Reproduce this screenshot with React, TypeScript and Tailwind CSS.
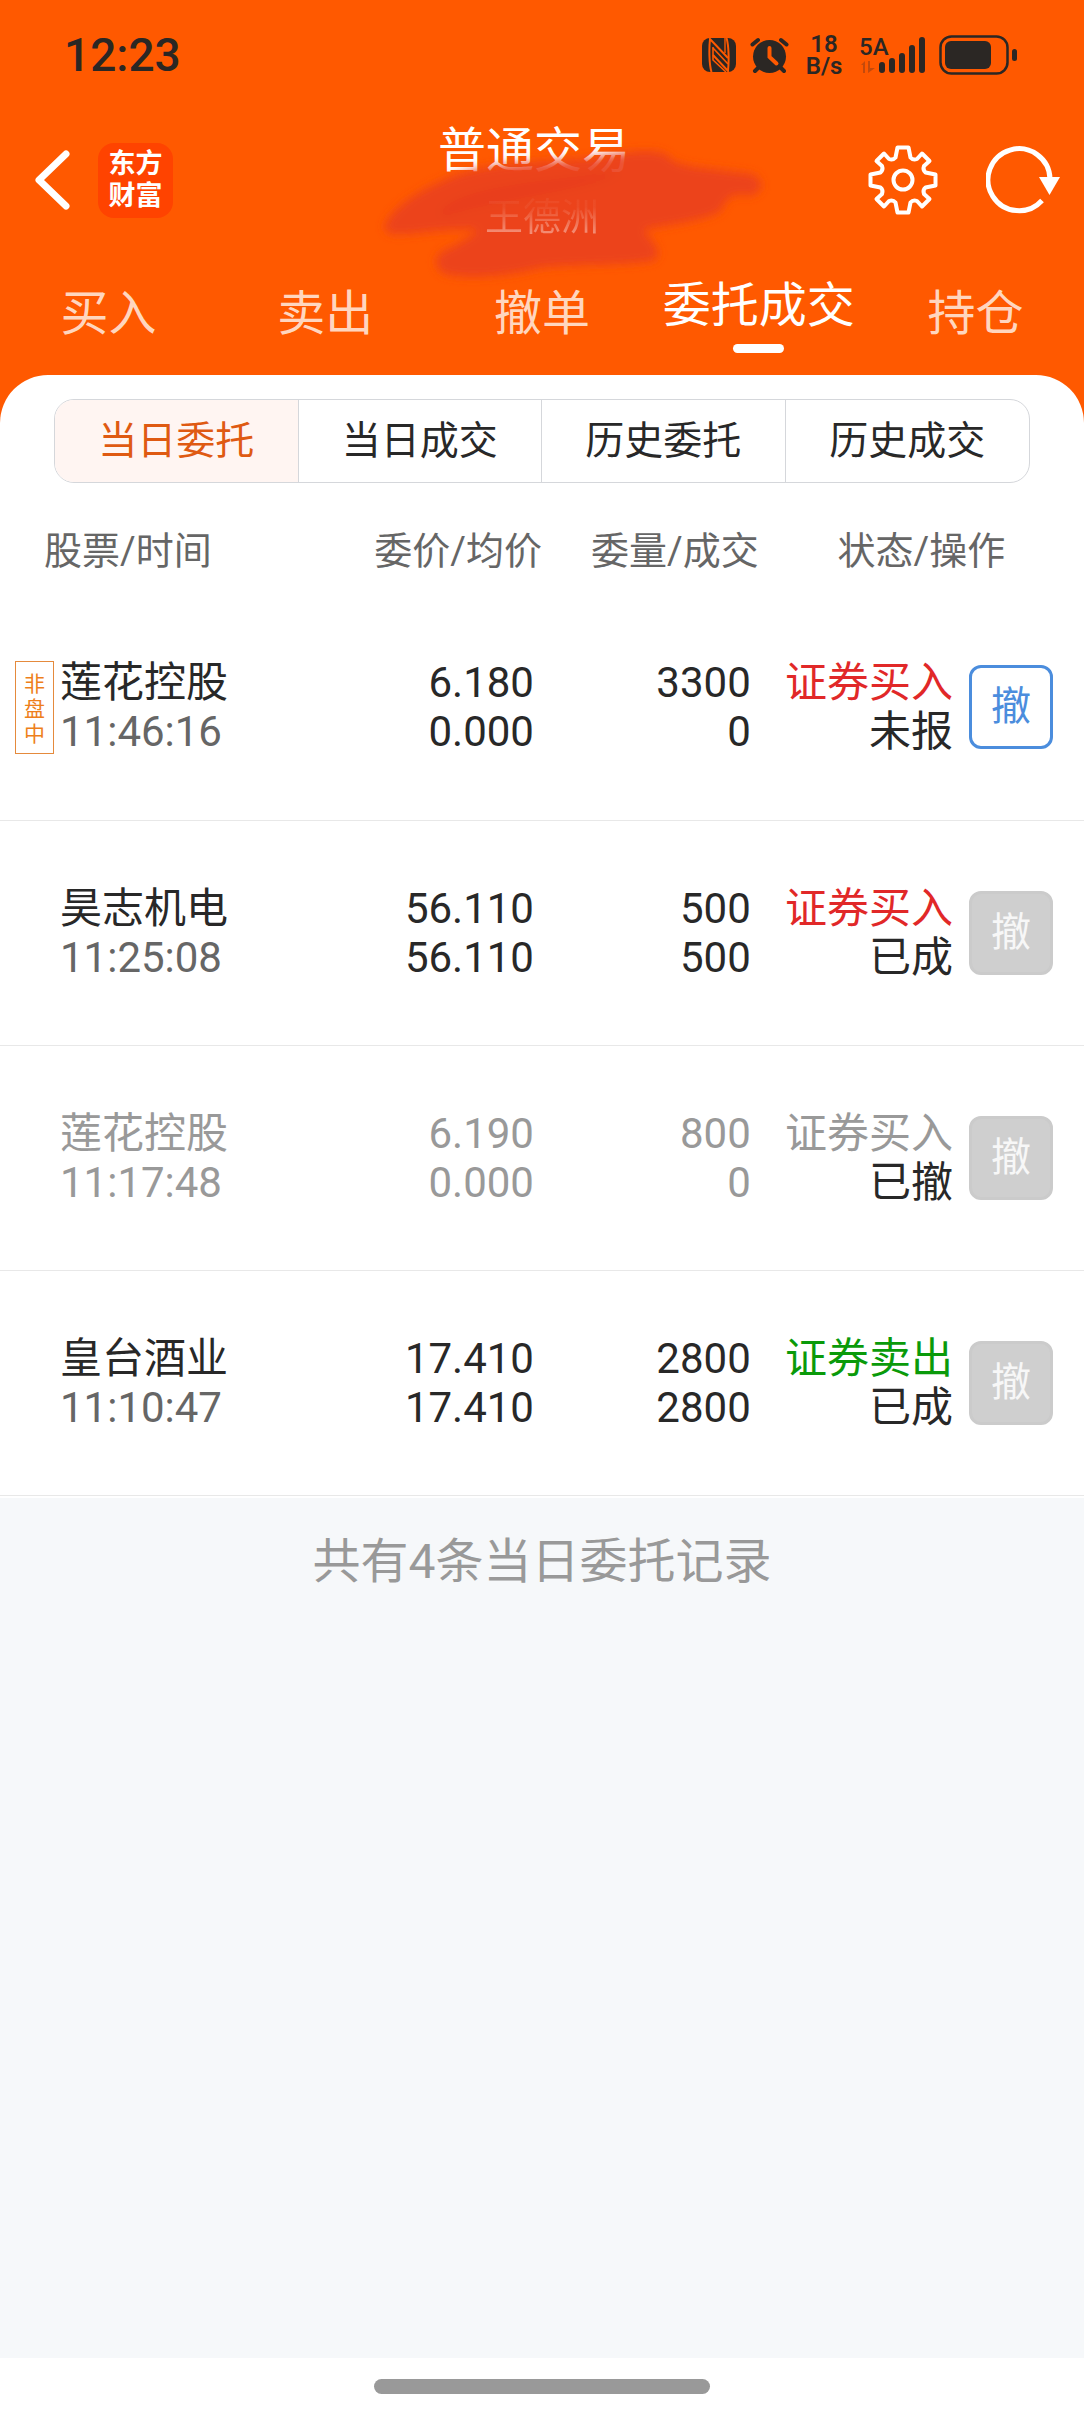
import { useState } from "react";
import clsx from "clsx";

interface Order {
  name: string;
  time: string;
  price: string;
  avgPrice: string;
  amount: string;
  filled: string;
  side: "buy" | "sell";
  status: string;
  tag?: string;
  cancellable?: boolean;
  cancelled?: boolean;
}

const TABS = ["买入", "卖出", "撤单", "委托成交", "持仓"];
const SEGMENTS = ["当日委托", "当日成交", "历史委托", "历史成交"];

const ORDERS: Order[] = [
  { name: "莲花控股", time: "11:46:16", price: "6.180", avgPrice: "0.000", amount: "3300", filled: "0", side: "buy", status: "未报", tag: "非盘中", cancellable: true },
  { name: "昊志机电", time: "11:25:08", price: "56.110", avgPrice: "56.110", amount: "500", filled: "500", side: "buy", status: "已成" },
  { name: "莲花控股", time: "11:17:48", price: "6.190", avgPrice: "0.000", amount: "800", filled: "0", side: "buy", status: "已撤", cancelled: true },
  { name: "皇台酒业", time: "11:10:47", price: "17.410", avgPrice: "17.410", amount: "2800", filled: "2800", side: "sell", status: "已成" },
];

function NfcIcon() {
  return (
    <svg width="34" height="34" viewBox="0 0 34 34">
      <rect width="34" height="34" rx="8" fill="#2b2724" />
      <g fill="none" stroke="#ff5900">
        <path d="M9.500 34C7 26 7 10 8 1L26 20" strokeWidth="2" />
        <path d="M24.500 0C27 8 27 24 26 33L11 17" strokeWidth="2" />
        <path d="M11 10 26 26" strokeWidth="1.600" />
        <path d="M11 9V22L24 34" strokeWidth="1.600" />
        <path d="M23 0V15" strokeWidth="1.400" />
      </g>
    </svg>
  );
}

function AlarmIcon() {
  return (
    <svg width="39" height="37" viewBox="0 0 39 37">
      <g stroke="#2b2724" strokeWidth="4" strokeLinecap="round">
        <path d="M2.500 7.500 8 3M36.500 7.500 31 3M8 31 5 34M31 31 34 34" />
      </g>
      <circle cx="19.500" cy="19.500" r="16.500" fill="#2b2724" />
      <path d="M19.500 11V20L26.500 26.500" fill="none" stroke="#ff5900" strokeWidth="4" strokeLinecap="round" />
    </svg>
  );
}

function SignalIcon() {
  return (
    <svg width="66" height="50" viewBox="0 -6 66 50">
      <text x="0" y="19" fontSize="24" fontWeight="500" fill="#2b2724">5A</text>
      <path d="M2 29 6 25V37H4V29ZM9 25H11V32H16L9 37Z" fill="#c34a0c" />
      <path d="M23 29V34M33 25V34M43 20V34M53 12V34M63 4V34" stroke="#2b2724" strokeWidth="6" strokeLinecap="round" />
    </svg>
  );
}

function BatteryIcon() {
  return (
    <svg width="79" height="40" viewBox="0 0 79 40">
      <rect x="1.500" y="1.500" width="67" height="37" rx="11" fill="none" stroke="#2b2724" strokeWidth="2.500" />
      <rect x="6" y="6" width="46" height="28" rx="6" fill="#2b2724" />
      <rect x="73" y="14" width="5" height="12" rx="2.500" fill="#2b2724" />
    </svg>
  );
}

function GearIcon() {
  return (
    <svg width="70" height="70" viewBox="-35 -35 70 70" fill="none" stroke="#fff" strokeWidth="4" strokeLinejoin="round">
      <circle r="9.500" />
      <path d="M-5.500-32.500H5.500L7.500-22.500Q10-19.500 14-21L19-26.500 26.500-19 21-14Q19.500-10 22.500-7.500L32.500-5.500V5.500L22.500 7.500Q19.500 10 21 14L26.500 19 19 26.500 14 21Q10 19.500 7.500 22.500L5.500 32.500H-5.500L-7.500 22.500Q-10 19.500-14 21L-19 26.500-26.500 19-21 14Q-19.500 10-22.500 7.500L-32.500 5.500V-5.500L-22.500-7.500Q-19.500-10-21-14L-26.500-19-19-26.500-14-21Q-10-19.500-7.500-22.500Z" />
    </svg>
  );
}

function RefreshIcon() {
  return (
    <svg width="74" height="68" viewBox="0 0 74 68">
      <path d="M56 54.500A31 31 0 1 1 64 33" fill="none" stroke="#fff" strokeWidth="5" />
      <path d="M53 31H74L63.500 49Z" fill="#fff" />
    </svg>
  );
}

// brush strokes that hide the account name
function Scribble() {
  return (
    <svg className="absolute left-1/2 top-1/2 -translate-x-1/2 -translate-y-1/2" width="500" height="220" viewBox="-68 -30 500 220">
      <defs>
        <filter id="soft" x="-10%" y="-20%" width="120%" height="140%">
          <feGaussianBlur stdDeviation="5" />
        </filter>
      </defs>
      <g filter="url(#soft)" fill="#ea4020">
        <path d="M24 128C30 108 60 90 84 80C120 62 180 62 230 58C270 50 300 48 308 56C316 68 350 68 392 74C406 80 404 94 388 96C370 92 366 100 360 112C340 122 300 126 284 130C292 142 302 148 296 160C270 166 220 164 180 168C150 176 110 180 84 174C72 166 74 152 90 148C104 140 112 136 118 130C80 128 50 136 30 134Z" fillOpacity="0.900" />
        <path d="M80 112C100 90 150 84 260 72C240 88 150 96 84 116Z" fill="#e53a20" fillOpacity="0.500" />
      </g>
    </svg>
  );
}

function OrderRow({ order }: { order: Order }) {
  const dim = order.cancelled;
  const main = dim ? "text-[#999999]" : "text-[#282828]";

  return (
    <tr className="h-[225px] border-b border-[#e8e8e8]">
      <td className="p-0">
        <div className="flex items-center gap-1.5 pl-[15px]">
          <span className="w-[39px] shrink-0">
            {order.tag && (
              <span className="flex flex-col items-center border border-[#e58a3c] pb-1.5 pt-2.5 text-[21px] leading-[25px] text-[#ee7f1b]">
                {[...order.tag].map((c) => (
                  <span key={c}>{c}</span>
                ))}
              </span>
            )}
          </span>
          <div>
            <div className={main}>{order.name}</div>
            <div className={dim ? "text-[#999999]" : "text-[#666666]"}>{order.time}</div>
          </div>
        </div>
      </td>
      <td className={clsx("p-0 pr-2 text-right", main)}>
        <div>{order.price}</div>
        <div>{order.avgPrice}</div>
      </td>
      <td className={clsx("p-0 pr-2 text-right", main)}>
        <div>{order.amount}</div>
        <div>{order.filled}</div>
      </td>
      <td className="p-0">
        <div className="flex items-center justify-end gap-4 pr-[31px] text-right">
          <div className="whitespace-nowrap">
            <div className={dim ? "text-[#999999]" : order.side === "buy" ? "text-[#e12828]" : "text-[#0a9a0a]"}>
              {order.side === "buy" ? "证券买入" : "证券卖出"}
            </div>
            <div className="text-[#282828]">{order.status}</div>
          </div>
          <button
            disabled={!order.cancellable}
            className={clsx(
              "size-[84px] shrink-0 rounded-xl border-3 text-[40px] leading-none",
              order.cancellable ? "border-[#4b8ddd] bg-white text-[#4b8ddd]" : "border-[#cbcbcb] bg-[#cfcfcf] text-[#f7f7f7]"
            )}
          >
            撤
          </button>
        </div>
      </td>
    </tr>
  );
}

export default function App() {
  const [tab, setTab] = useState("委托成交");
  const [segment, setSegment] = useState("当日委托");

  return (
    <div className="flex min-h-screen flex-col bg-[#f6f8fa] font-['Roboto','Noto_Sans_CJK_SC',sans-serif]">
      <div className="bg-[#ff5900]">
        {/* Status bar */}
        <div className="flex h-[110px] items-center justify-between pl-16 pr-[66px] text-[#2b2724]">
          <span className="text-[46px] font-medium leading-none">12:23</span>
          <div className="flex items-center gap-3.5">
            <NfcIcon />
            <AlarmIcon />
            <div className="flex w-[42px] flex-col items-center text-[24px] font-semibold leading-[22px]">
              <span>18</span>
              <span>B/s</span>
            </div>
            <SignalIcon />
            <BatteryIcon />
          </div>
        </div>

        {/* Title bar */}
        <header className="relative flex h-[140px] items-center justify-between pl-[34px] pr-6">
          <div className="flex items-center gap-[26px]">
            <button aria-label="返回">
              <svg width="38" height="62" viewBox="0 0 38 62" fill="none" stroke="#fff" strokeWidth="7" strokeLinecap="round" strokeLinejoin="round">
                <path d="M32 5 5 31 32 57" />
              </svg>
            </button>
            <div className="flex size-[75px] flex-col items-center justify-center rounded-2xl bg-[#ff4300] text-[27px] font-bold leading-8 text-white">
              <span>东方</span>
              <span>财富</span>
            </div>
          </div>
          <div className="flex items-center gap-12">
            <button aria-label="设置">
              <GearIcon />
            </button>
            <button aria-label="刷新">
              <RefreshIcon />
            </button>
          </div>
          <div className="pointer-events-none absolute inset-0 flex flex-col justify-center pt-2 text-center leading-[66px] text-white">
            <h1 className="pr-4 text-[48px]">普通交易</h1>
            <Scribble />
            <p className="relative bg-linear-to-b from-white/5 from-35% to-white/45 to-80% bg-clip-text text-[38px] text-transparent">王德洲</p>
          </div>
        </header>

        <nav className="relative grid h-[125px] grid-cols-5 text-[48px] leading-[64px]">
          {TABS.map((t) => (
            <button
              key={t}
              onClick={() => setTab(t)}
              className={clsx("flex flex-col items-center whitespace-nowrap", t === tab ? "pt-6 text-white" : "pt-8 text-[#ffd6bf]")}
            >
              {t}
              {t === tab && <span className="mt-1.5 h-[9px] w-[51px] rounded-full bg-white" />}
            </button>
          ))}
        </nav>

        <main className="rounded-t-[48px] bg-white pb-0.5 pt-6">
          <div className="mx-[54px] grid h-[84px] grid-cols-4 divide-x divide-[#d5d7db] overflow-hidden rounded-[20px] border border-[#d5d7db] text-[39px]">
            {SEGMENTS.map((s) => (
              <button
                key={s}
                onClick={() => setSegment(s)}
                className={clsx("leading-none", s === segment ? "bg-[#fff5f2] text-[#df5a12]" : "text-[#282828]")}
              >
                {s}
              </button>
            ))}
          </div>

          <table className="mt-6 w-full table-fixed text-[42px] leading-[49px]">
            <thead>
              <tr className="h-[88px] text-[38px] text-[#666666]">
                <th className="w-[30%] p-0 pl-11 text-left font-normal">股票/时间</th>
                <th className="w-[20%] p-0 text-right font-normal">委价/均价</th>
                <th className="w-[20%] p-0 text-right font-normal">委量/成交</th>
                <th className="w-[30%] p-0 text-center font-normal">状态/操作</th>
              </tr>
            </thead>
            <tbody>
              {ORDERS.map((o) => (
                <OrderRow key={o.time} order={o} />
              ))}
            </tbody>
          </table>
        </main>
      </div>

      <p className="flex-1 pt-8 text-center text-[48px] leading-[64px] text-[#999999]">共有{ORDERS.length}条当日委托记录</p>

      {/* Gesture bar */}
      <footer className="flex h-[54px] justify-center bg-white pt-[21px]">
        <div className="h-[15px] w-[336px] rounded-full bg-[#999999]" />
      </footer>
    </div>
  );
}
